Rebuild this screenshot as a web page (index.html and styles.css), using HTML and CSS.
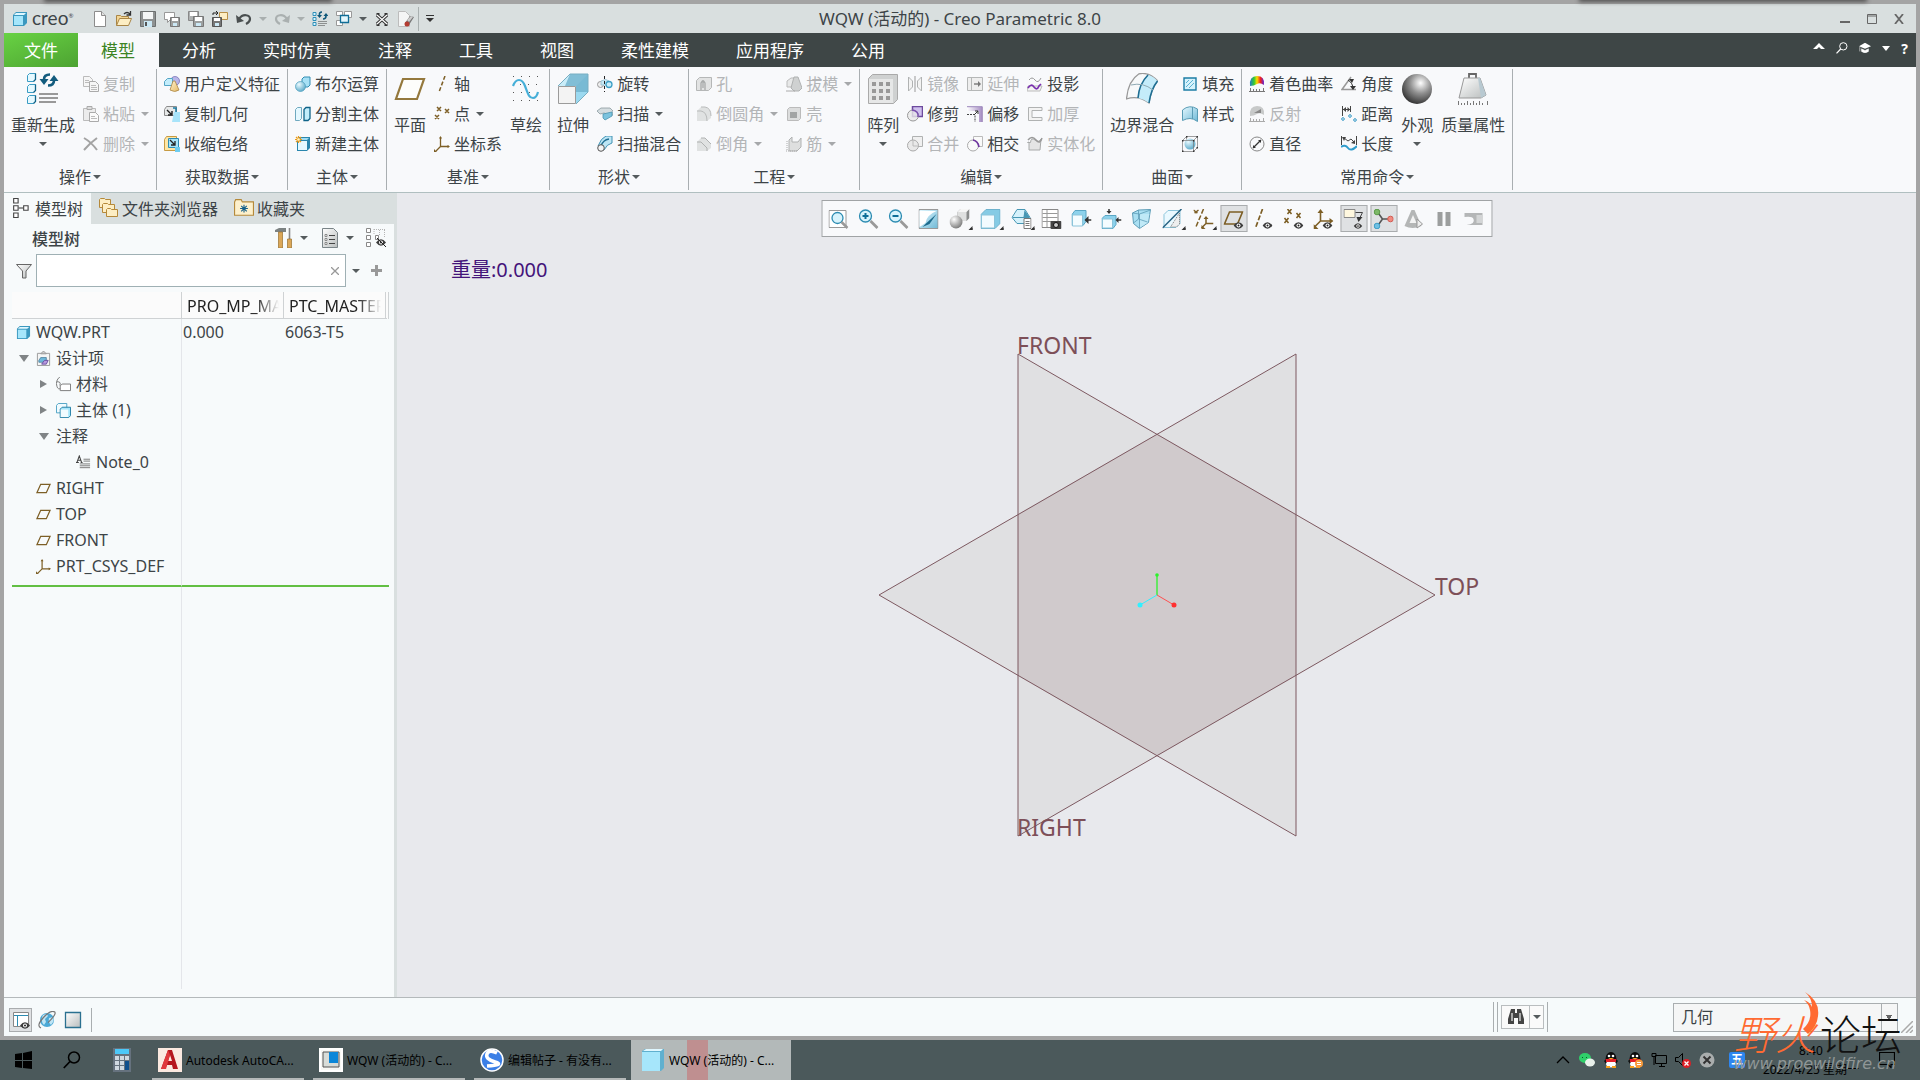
FILE: index.html
```html
<!DOCTYPE html>
<html lang="zh-CN">

<head>
    <meta charset="UTF-8">
    <meta name="viewport" content="width=device-width, initial-scale=1">
    <title>WQW (活动的) - Creo Parametric 8.0</title>
    <link rel="stylesheet" href="styles.css">
</head>

<body>
    <svg class="sprite" width="0" height="0" aria-hidden="true">
        <defs>
            <linearGradient id="g-blue" x1="0" y1="0" x2="1" y2="1"><stop offset="0" stop-color="#e4f8ff" /><stop offset="1" stop-color="#6fb9d6" /></linearGradient>
            <linearGradient id="g-gray" x1="0" y1="0" x2="1" y2="1"><stop offset="0" stop-color="#fff" /><stop offset="1" stop-color="#b9bdbd" /></linearGradient>
            <linearGradient id="g-gold" x1="0" y1="0" x2="1" y2="1"><stop offset="0" stop-color="#fff3d0" /><stop offset="1" stop-color="#e5b963" /></linearGradient>
            <linearGradient id="g-purple" x1="0" y1="0" x2="1" y2="0"><stop offset="0" stop-color="#fff" /><stop offset="1" stop-color="#a78fc4" /></linearGradient>
            <linearGradient id="g-rainbow"><stop offset="0" stop-color="#27c" /><stop offset=".3" stop-color="#3c3" /><stop offset=".5" stop-color="#fd0" /><stop offset=".75" stop-color="#e22" /><stop offset="1" stop-color="#52d" /></linearGradient>
            <radialGradient id="g-ball" cx=".62" cy=".3" r=".7"><stop offset="0" stop-color="#fff" /><stop offset=".5" stop-color="#909090" /><stop offset="1" stop-color="#3a3a3a" /></radialGradient>
            <radialGradient id="g-soft" cx=".35" cy=".3" r=".75"><stop offset="0" stop-color="#fff" /><stop offset="1" stop-color="#777" /></radialGradient>
            <radialGradient id="g-bball" cx=".35" cy=".3" r=".75"><stop offset="0" stop-color="#eafaff" /><stop offset="1" stop-color="#5aa9c8" /></radialGradient>
        </defs>

        <!-- shared pieces -->
        <symbol id="cube" viewBox="0 0 16 16"><path d="M1 4l3-3h11v11l-3 3H1z" fill="#3b98bf" /><path d="M2 5h9v9H2z" fill="#a6e6fb" /><path d="M2 4l2-2h10l-2 2z" fill="#dff7ff" /></symbol>
        <symbol id="eye" viewBox="0 0 10 7"><path d="M0 3.500Q5-3 10 3.500 5 10 0 3.500z" fill="#3c3c3c" /><circle cx="5" cy="3.500" r="2" fill="#fff" /><circle cx="5" cy="3.500" r="1" fill="#222" /></symbol>

        <!-- quick access -->
        <symbol id="new" viewBox="0 0 16 16"><path d="M2.500.5h7l4 4v11h-11z" fill="#fff" stroke="#8c8c8c" /><path d="M9.500.5v4h4" fill="#e2e2e2" stroke="#8c8c8c" /></symbol>
        <symbol id="open" viewBox="0 0 16 16"><path d="M.5 14.500v-10h4l1 1h7v3" fill="#f3d594" stroke="#a98546" /><path d="M.5 14.500l3-7h12l-3 7z" fill="#fdeec4" stroke="#a98546" /><path d="M8 3q3-3 6 0M14.500 0v4h-4" fill="none" stroke="#333" stroke-width="1.300" /></symbol>
        <symbol id="save" viewBox="0 0 16 16"><path d="M.5.5h15v15H.5z" fill="#8f9292" stroke="#6d7070" /><path d="M3 1h10v7H3z" fill="#f4f6f6" /><path d="M4 10h8v6H4z" fill="#cbe8f5" /><path d="M5 11h2v4H5z" fill="#555" /></symbol>
        <symbol id="saveas" viewBox="0 0 16 16"><path d="M.5 1.500h10v7h-4l-3 3v-3h-3z" fill="#fff" stroke="#999" /><path d="M6.500 6.500h9v9h-9z" fill="#9c9f9f" stroke="#777" /><path d="M8 7h6v3H8z" fill="#fff" /><path d="M9 12h4v3H9z" fill="#cbe8f5" /></symbol>
        <symbol id="savecopy" viewBox="0 0 16 16"><path d="M.5.5h10v9h-10z" fill="#aeb1b1" stroke="#888" /><path d="M2 1h7v4H2z" fill="#fff" /><path d="M5.500 5.500h10v10h-10z" fill="#9c9f9f" stroke="#777" /><path d="M7 6h7v4H7z" fill="#fff" /><path d="M8 12h5v3H8z" fill="#cbe8f5" /></symbol>
        <symbol id="saveto" viewBox="0 0 16 16"><path d="M7.500 1.500h8v7h-8z" fill="#fdeec4" stroke="#b89047" /><path d="M.5 6.500h9v9h-9z" fill="#777" stroke="#555" /><path d="M2 7h6v3H2z" fill="#fff" /><path d="M3 12h4v3H3z" fill="#cbe8f5" /><path d="M1 4V2h4M4 0l2 2-2 2" fill="none" stroke="#222" /></symbol>
        <symbol id="undo" viewBox="0 0 16 16"><path d="M3 8c4-6 11-4 11 0 0 3-2 4-4 5" fill="none" stroke="#4a4f50" stroke-width="2.200" /><path d="M0 4l1 8 7-2z" fill="#4a4f50" /></symbol>
        <symbol id="redo" viewBox="0 0 16 16"><path d="M13 8C9 2 2 4 2 8c0 3 2 4 4 5" fill="none" stroke="#aab0b0" stroke-width="2.200" /><path d="M16 4l-1 8-7-2z" fill="#aab0b0" /></symbol>
        <symbol id="regen" viewBox="0 0 16 16"><path d="M1 1.500h3v3H1zM1 6.500h3v3H1zM1 11.500h3v3H1z" fill="#d8f4ff" stroke="#2f8fb8" /><path d="M6 10.500h9M6 12.500h9M6 14.500h7" stroke="#8d9090" /><path d="M10 1Q7 1 7.500 4M11 8q3 0 3-3" fill="none" stroke="#10587a" stroke-width="1.600" /><path d="M5 4h5L7.500 7zM11.500 5h5L14 2z" fill="#10587a" /></symbol>
        <symbol id="windows" viewBox="0 0 16 16"><path d="M.5.500h6v4h-6zM8.500.500h7v6h-7zM.5 9.500h6v5h-6z" fill="#fff" stroke="#999" /><path d="M4.500 4.500h8v7h-8z" fill="#e4f6fc" stroke="#0f6d96" stroke-width="1.300" /></symbol>
        <symbol id="closewin" viewBox="0 0 16 16"><path d="M3 4l10 9M13 4L3 13M2.500 3.500h3M10.500 3.500h3M2.500 13.500h3M10.500 13.500h3" stroke="#333" stroke-width="3.200" /><path d="M3 4l10 9M13 4L3 13" stroke="#fff" stroke-width="1.200" /></symbol>
        <symbol id="erase" viewBox="0 0 16 16"><path d="M.5.5h7l4 4v11H.5z" fill="#f4f5f5" stroke="#bcbcbc" /><path d="M7 12l5-7 4 1-5 8z" fill="#777" /><path d="M9 9l4-4 2 1-4 5z" fill="#ccc" /><circle cx="9" cy="13" r="2.500" fill="#b33c32" /></symbol>

        <!-- ribbon, large -->
        <symbol id="regen32" viewBox="0 0 32 32"><g fill="#e6f9ff" stroke="#3a9cc4"><path d="M.5 2.500l2-2h6v6l-2 2h-6zM.5 13.500l2-2h6v6l-2 2h-6zM.5 24.500l2-2h6v6l-2 2h-6z" /></g><path d="M8.500.5v6l-2 2M8.500 11.500v6l-2 2M8.500 22.500v6l-2 2" fill="none" stroke="#0f6388" stroke-width="1.300" /><path d="M12 21h19M12 25h19M12 29h17" stroke="#999" stroke-width="2" /><path d="M23 1.500q-6 0-6 5M21 12.500q6 0 6-5" fill="none" stroke="#135c7e" stroke-width="2.600" /><path d="M12.500 6h9L17 12zM22.500 8h9L27 2z" fill="#135c7e" /></symbol>
        <symbol id="plane32" viewBox="0 0 32 32"><path d="M9 6h21L23 26H2z" fill="#fdfdfb" stroke="#94783c" stroke-width="2.200" /></symbol>
        <symbol id="sketch32" viewBox="0 0 32 32"><path d="M3 3.500h26M3 11.500h2M10 11.500h20M3 19.500h26M3 27.500h26" stroke="#555" stroke-dasharray="1 7" /><path d="M3 13c3-8 9-8 12 0s4 12 8 12c3 0 4-2 5-6" fill="none" stroke="#46afd8" stroke-width="2.200" /></symbol>
        <symbol id="extrude32" viewBox="0 0 32 32"><path d="M1 13L13 1h18L19 13z" fill="#c9edf9" /><path d="M31 1v18L19 31V13z" fill="#9bd9f0" /><path d="M13 1h18v18H19v-6H8z" fill="#6fb2cd" opacity=".8" /><path d="M1.500 13.500h17v17h-17z" fill="#f3f3f3" stroke="#9b9b9b" /><path d="M1 13L13 1h18v18L19 31" fill="none" stroke="#79aec2" /></symbol>
        <symbol id="array32" viewBox="0 0 32 32"><path d="M1.500 5.500l4-4h25v25l-4 4h-25z" fill="#cfd1d1" stroke="#aaa" /><path d="M2 6h24v24H2z" fill="#e6e7e7" /><path d="M5 9h4v4H5zM12 9h4v4h-4zM19 9h4v4h-4zM5 16h4v4H5zM12 16h4v4h-4zM19 16h4v4h-4zM5 23h4v4H5zM12 23h4v4h-4zM19 23h4v4h-4z" fill="#999" /></symbol>
        <symbol id="blend32" viewBox="0 0 32 32"><path d="M.5 26Q2 8 13 .8q10-2 18.500 7Q25 16 23 30 12 22 .5 26z" fill="#f7f9fa" stroke="#999" stroke-width="1.300" /><path d="M22 2q5 1 9.500 6Q25 16 23 30q-5-4-11-5Q13 11 22 2z" fill="#c4ecfa" /><path d="M22 2Q13 11 12 25M31.500 8Q25 16 23 30" fill="none" stroke="#1f6e92" stroke-width="1.600" /><path d="M5 12q12-3 22 5" fill="none" stroke="#8fa9b3" /></symbol>
        <symbol id="ball32" viewBox="0 0 32 32"><circle cx="16" cy="16" r="15" fill="url(#g-ball)" /></symbol>
        <symbol id="mass32" viewBox="0 0 32 32"><path d="M12 5V1h7v4" fill="none" stroke="#666" stroke-width="1.800" /><path d="M7 5h16l6 17-5 3H2z" fill="url(#g-gray)" stroke="#999" /><path d="M21 5l3 20 5-3-6-17z" fill="#b8c9d1" /><path d="M1 32.500h30M1.500 28v4M4.500 30v2M7.500 30v2M10.500 28v4M13.500 30v2M16.500 28v4M19.500 30v2M22.500 28v4M25.500 30v2M30.500 28v4" stroke="#777" /></symbol>

        <!-- ribbon, small -->
        <symbol id="copy" viewBox="0 0 16 16"><path d="M.5.5h6l3 3v7h-9z" fill="#f6f6f6" stroke="#bbb" /><path d="M6.500 5.500h6l3 3v7h-9z" fill="#f6f6f6" stroke="#aaa" /><path d="M2 4.500h4M2 6.500h4M8 9.500h5M8 11.500h6M8 13.500h6" stroke="#bbb" /></symbol>
        <symbol id="paste" viewBox="0 0 16 16"><path d="M.5 2.500h12v12H.5z" fill="#ececec" stroke="#bbb" /><path d="M4 .5h5v3H4z" fill="#ddd" stroke="#aaa" /><path d="M6.500 6.500h6l3 3v6h-9z" fill="#fafafa" stroke="#aaa" /><path d="M8 10.500h4M8 12.500h6" stroke="#bbb" /></symbol>
        <symbol id="delete" viewBox="0 0 16 16"><path d="M1 2q7 4 13 12M14 2Q7 7 1 14" fill="none" stroke="#a3a3a3" stroke-width="2" /></symbol>
        <symbol id="udf" viewBox="0 0 16 16"><circle cx="11" cy="5" r="4.500" fill="#b9b5e8" stroke="#7b76b8" stroke-width=".8" /><path d="M.5 5.500l3-3h5v7h-8z" fill="#c3edfb" stroke="#55a5c5" /><path d="M9 5h2l4 9q-4 3-9 0z" fill="url(#g-gold)" stroke="#a98546" stroke-width=".8" /></symbol>
        <symbol id="copygeom" viewBox="0 0 16 16"><path d="M.5 3.500l2-3h10v9H.5z" fill="#e6e8e8" stroke="#8c8c8c" /><path d="M10 6h6v10H8z" fill="#a8e4fa" /><path d="M3 4l5 5M8 5v4H4" stroke="#222" stroke-width="1.400" fill="none" /><path d="M9 2h3v4" fill="none" stroke="#1b7ba3" stroke-width="1.500" /></symbol>
        <symbol id="shrink" viewBox="0 0 16 16"><path d="M.5 3.500l2-3h10v14H.5z" fill="#ffe6a4" stroke="#c79b43" /><path d="M4.500 2.500h10v9h-10z" fill="#a8e4fa" stroke="#2c8cb4" /><path d="M6 4l5 5M11 5v4H7" stroke="#222" stroke-width="1.300" fill="none" /><path d="M11 11h5v5h-5z" fill="#6fcdf0" /></symbol>
        <symbol id="boolean" viewBox="0 0 16 16"><path d="M7 3l2-2h6v8l-2 2H7z" fill="#a6e0f5" stroke="#328db3" /><circle cx="5.500" cy="10.500" r="5" fill="url(#g-bball)" stroke="#4a9dbd" stroke-width=".7" /></symbol>
        <symbol id="split" viewBox="0 0 16 16"><path d="M.5 3.500l2-2h4v11l-2 2h-4z" fill="#e4f8ff" stroke="#6fa9bf" /><path d="M9 3.500l2-2h4v11l-2 2H9z" fill="#c2edfb" stroke="#0f6388" stroke-width="1.300" /></symbol>
        <symbol id="newbody" viewBox="0 0 16 16"><path d="M2 4l2-3h11v11l-3 3H2z" fill="#2a86ad" /><path d="M3 5h9v9H3z" fill="#e4f8ff" /><path d="M5 4l1-2h8l-2 2z" fill="#9fdcf2" /><path d="M3.500 0v7M0 3.500h7M1 1l5 5M6 1L1 6" stroke="#e99a1b" stroke-width="1.200" /><circle cx="3.500" cy="3.500" r="1.300" fill="#fff6c6" /></symbol>
        <symbol id="axis" viewBox="0 0 16 16"><path d="M11 0L5 16" stroke="#7d5f26" stroke-width="1.500" stroke-dasharray="4 2" /></symbol>
        <symbol id="point" viewBox="0 0 16 16"><path d="M3 1l4 4M7 1L3 5M11 3l4 4M15 3l-4 4M1 9l4 4M5 9l-4 4" stroke="#7d5f26" stroke-width="1.500" /></symbol>
        <symbol id="csys" viewBox="0 0 16 16"><path d="M6.500 1v9.500H15M6.500 10.500L2 15" fill="none" stroke="#7d5f26" stroke-width="1.300" /><path d="M5 2.500l1.500-2.500L8 2.500zM13.500 9l2.500 1.500-2.500 1.500zM0 13l3 3H0z" fill="#7d5f26" /></symbol>
        <symbol id="revolve" viewBox="0 0 16 16"><circle cx="3.500" cy="8.500" r="3" fill="#eee" stroke="#999" /><path d="M4 5q5-3 8 0v4H4z" fill="#c9e9f5" stroke="#85b5c8" stroke-width=".7" /><circle cx="12" cy="8.500" r="3" fill="#c9ecf8" stroke="#3d9fc6" stroke-width="1.300" /><path d="M7.500 0v16" stroke="#222" stroke-dasharray="3 2" /></symbol>
        <symbol id="sweep" viewBox="0 0 16 16"><path d="M0 5l4-3h9l3 3v4h-4l-5-2-4 1z" fill="#d5dde0" stroke="#8a9a9f" stroke-width=".8" /><path d="M6 8l9-2v4l-7 4-2-2z" fill="#7cc3de" stroke="#4d94b0" stroke-width=".8" /></symbol>
        <symbol id="sweepblend" viewBox="0 0 16 16"><path d="M1 10Q4 2 9 0h6v7Q10 8 7 14z" fill="#bce5f4" stroke="#4092b3" /><path d="M4 10Q6 4 12 3" fill="none" stroke="#1f6e92" stroke-width="1.300" /><circle cx="4" cy="12" r="3.300" fill="#f3f3f3" stroke="#555" /></symbol>
        <symbol id="hole" viewBox="0 0 16 16"><path d="M.5 4.500l3-3h12v10l-3 3H.5z" fill="#e2e3e3" stroke="#b5b7b7" /><path d="M5 14V7q2-4 4 0v7M7 4v8" fill="none" stroke="#a8aaaa" stroke-width="1.300" /></symbol>
        <symbol id="round" viewBox="0 0 16 16"><path d="M1 5l4-4h4q6 1 6 8v3l-4 3H1z" fill="#e0e2e2" /><path d="M1 5h4q6 1 6 10M5 1h4q6 1 6 9" fill="none" stroke="#b9bbbb" /></symbol>
        <symbol id="chamfer" viewBox="0 0 16 16"><path d="M1 6l4-4h4l6 6v4l-4 3H1z" fill="#e0e2e2" /><path d="M1 6h4l6 6v3M5 2h4l6 6" fill="none" stroke="#b0b2b2" /></symbol>
        <symbol id="draft" viewBox="0 0 16 16"><path d="M1 5l4-3h5v9H1z" fill="#e7e8e8" stroke="#bbb" /><path d="M8 1h4l4 11-3 3H8L5 12z" fill="#cfd1d1" stroke="#b0b2b2" /><path d="M0 15h9" stroke="#aaa" /></symbol>
        <symbol id="shell" viewBox="0 0 16 16"><path d="M1.500 3.500l2-2h11v11l-2 2h-11z" fill="#dcdddd" stroke="#bbb" /><path d="M4 6h7v6H4z" fill="#a2a4a4" /></symbol>
        <symbol id="rib" viewBox="0 0 16 16"><path d="M3 4l3-3v5h6l3-4v9l-4 4H3z" fill="#dedfdf" stroke="#b0b2b2" /><path d="M0 15h12M1 5v10" stroke="#aaa" stroke-dasharray="1 1" /></symbol>
        <symbol id="mirror" viewBox="0 0 16 16"><path d="M1.500 1l4 4v6l-4 4zM14.500 1l-4 4v6l4 4z" fill="#f3f3f3" stroke="#b0b2b2" /><path d="M8 0v16" stroke="#999" /></symbol>
        <symbol id="trim" viewBox="0 0 16 16"><path d="M5.500.5h10v10h-10z" fill="#cfc0ee" stroke="#6d4a9e" stroke-width="1.500" /><circle cx="6" cy="9.500" r="5.500" fill="#e9e9e9" fill-opacity=".8" stroke="#999" /><path d="M5 4q7 1 6 7" stroke="#7a4fb0" fill="none" stroke-width="1.500" /></symbol>
        <symbol id="merge" viewBox="0 0 16 16"><path d="M5.500.5h10v10h-10z" fill="#f0f0f0" stroke="#b0b2b2" /><circle cx="6" cy="9.500" r="5.500" fill="#e9e9e9" stroke="#aaa" /><path d="M6 4v6h5" fill="none" stroke="#bbb" /></symbol>
        <symbol id="extend" viewBox="0 0 16 16"><path d="M.5 1.500h15v13H.5z" fill="#eee" stroke="#b5b7b7" /><path d="M4.500 2v12" stroke="#b5b7b7" /><path d="M7 8h5" stroke="#777" stroke-width="1.400" /><path d="M11 5l3 3-3 3z" fill="#777" /></symbol>
        <symbol id="offset" viewBox="0 0 16 16"><path d="M0 1h15v15h-3V5H0z" fill="url(#g-purple)" /><path d="M0 .7h15.300V16" fill="none" stroke="#9b85ba" /><path d="M0 8.500h8V16" fill="none" stroke="#444" stroke-dasharray="2 1" /><path d="M7 9l4-4M11 8V5H8" fill="none" stroke="#333" /></symbol>
        <symbol id="intersect" viewBox="0 0 16 16"><path d="M6.500.5h9v10h-9z" fill="#fafafa" stroke="#bbb" /><circle cx="6" cy="9.500" r="5.500" fill="#fafafa" stroke="#aaa" /><path d="M6 4q5 1 6 7" stroke="#7037a0" fill="none" stroke-width="1.700" /></symbol>
        <symbol id="project" viewBox="0 0 16 16"><path d="M2 4q3-4 6 0t6-2" fill="none" stroke="#999" /><path d="M1 10h14l-2 5H0z" fill="#f3f3f3" stroke="#bbb" /><path d="M1 12q3-5 6-1t5-1l2-2" fill="none" stroke="#7a2fb0" stroke-width="1.700" /></symbol>
        <symbol id="thicken" viewBox="0 0 16 16"><path d="M15 1.500H1.500v13H15v-3H5v-7h10z" fill="#f3f3f3" stroke="#b0b2b2" /></symbol>
        <symbol id="solidify" viewBox="0 0 16 16"><path d="M.5 6.500h3Q4 1 8 4t6-1l-1 11H2V6z" fill="#e4e5e5" stroke="#a8aaaa" /><path d="M1 4q4-5 8 0t6-2" fill="none" stroke="#999" stroke-width="1.500" /></symbol>
        <symbol id="fill" viewBox="0 0 16 16"><path d="M2 2h12v12H2z" fill="#d5f2fc" stroke="#1d7da5" stroke-width="1.400" /><path d="M4 11l7-7M7 12l5-5M4 7l3-3" stroke="#5cb3d3" /></symbol>
        <symbol id="style" viewBox="0 0 16 16"><path d="M.5 14.500V4q7-6 15-1v12.500q-4-3-7.500-3t-7.500 2z" fill="url(#g-blue)" stroke="#5a9cb5" /><path d="M10.500 1v12" stroke="#5a9cb5" /></symbol>
        <symbol id="freestyle" viewBox="0 0 16 16"><circle cx="8" cy="8" r="5.500" fill="url(#g-bball)" /><path d="M.5 4.500h11v11H.5zM4.500.5h11v11M4.500.5v3M.5 4.500l4-4M11.500 4.500l4-4M11.500 15.500l4-4" fill="none" stroke="#777" stroke-width=".7" /><path d="M0 4h1.500v1.500H0zM11 4h1.500v1.500H11zM0 14.500h1.500V16H0zM11 14.500h1.500V16H11zM4 0h1.500v1.500H4zM14.500 0H16v1.500h-1.500zM14.500 11H16v1.500h-1.500z" fill="#333" /></symbol>
        <symbol id="curvature" viewBox="0 0 16 16"><path d="M1 10Q0 0 8 0t7 9q-4-3-7-1t-7 2z" fill="url(#g-rainbow)" /><path d="M0 15.500h16M1.500 12v3M4.500 13v2M7.500 13v2M10.500 13v2M14.500 12v3" stroke="#777" /></symbol>
        <symbol id="reflect" viewBox="0 0 16 16"><path d="M1 10Q0 0 8 0t7 9q-4-3-7-1t-7 2z" fill="#c7c9c9" /><path d="M5 7l7-4v4z" fill="#888" /><path d="M0 15.500h16M1.500 12v3M4.500 13v2M7.500 13v2M10.500 13v2M14.500 12v3" stroke="#aaa" /></symbol>
        <symbol id="diameter" viewBox="0 0 16 16"><circle cx="8" cy="8" r="7" fill="none" stroke="#888" /><path d="M4 12l8-8" stroke="#333" stroke-width="1.300" /><path d="M4 9v3h3zM12 7V4H9z" fill="#333" /></symbol>
        <symbol id="angle" viewBox="0 0 16 16"><path d="M10 1L1 13.500h14" fill="none" stroke="#999" stroke-width="1.500" /><path d="M7 4q5 3 5 9" fill="none" stroke="#333" /><path d="M8 3l5 0-2 4zM9 10h6l-3 4z" fill="#333" /></symbol>
        <symbol id="distance" viewBox="0 0 16 16"><path d="M1.500 0v10M9.500 0v6M2 3.500h7" stroke="#444" /><path d="M5 1L2 3.500 5 6zM6.500 1L9 3.500 6.500 6z" fill="#444" /><circle cx="2" cy="13" r="1.300" fill="#fff" stroke="#2f95c4" /><circle cx="9" cy="10" r="1.300" fill="#fff" stroke="#2f95c4" /><circle cx="14" cy="14" r="1.300" fill="#fff" stroke="#2f95c4" /></symbol>
        <symbol id="length" viewBox="0 0 16 16"><path d="M.5 0v9M15.500 0v9M3 2l4 3 3-2 4 4" fill="none" stroke="#444" /><path d="M1 1h4L3 5zM14 8V4l-4 3z" fill="#444" /><path d="M0 11q4-3 7 1t9-2" fill="none" stroke="#2f9ccc" stroke-width="2" /></symbol>

        <!-- graphics toolbar -->
        <symbol id="v-refit" viewBox="0 0 20 20"><path d="M.5 1.500h17v17H.5z" fill="#fff" stroke="#999" /><circle cx="9" cy="9" r="5.500" fill="#d8f3fc" stroke="#2d8cb2" stroke-width="1.300" /><path d="M13 13l6 6" stroke="#999" stroke-width="2.500" /></symbol>
        <symbol id="v-zoomin" viewBox="0 0 20 20"><circle cx="7" cy="7" r="6" fill="#d8f3fc" stroke="#2d8cb2" stroke-width="1.300" /><path d="M4 7h6M7 4v6" stroke="#0e6e98" stroke-width="2" /><path d="M12 12l7 7" stroke="#999" stroke-width="2.800" /></symbol>
        <symbol id="v-zoomout" viewBox="0 0 20 20"><circle cx="7" cy="7" r="6" fill="#d8f3fc" stroke="#2d8cb2" stroke-width="1.300" /><path d="M4 7h6" stroke="#0e6e98" stroke-width="2" /><path d="M12 12l7 7" stroke="#999" stroke-width="2.800" /></symbol>
        <symbol id="v-repaint" viewBox="0 0 20 20"><path d="M.5.5h19v19H.5z" fill="url(#g-blue)" stroke="#999" /><path d="M1 2h17Q8 6 7 14l-6 4z" fill="#fff" /><path d="M18 5L8 14l-4 4 7-3z" fill="#1d6b8d" /></symbol>
        <symbol id="v-shade" viewBox="0 0 20 20"><path d="M8 3l3-3h9v9l-3 3H8z" fill="#8a8c8c" /><path d="M8 3h9v9H8z" fill="#dfe0e0" /><path d="M8 3l3-3h9l-3 3z" fill="#f6f6f6" /><circle cx="6.500" cy="13" r="6.500" fill="url(#g-soft)" /></symbol>
        <symbol id="v-style" viewBox="0 0 20 20"><path d="M.5 5.500l5-5h14v14l-5 5H.5z" fill="#85cbe5" stroke="#6eb2cd" /><path d="M1 6h13v13H1z" fill="#f2fbff" stroke="#8bc4da" /></symbol>
        <symbol id="v-saved" viewBox="0 0 20 20"><path d="M.5 8.500l5-8h8l5 8-5 6h-8z" fill="#d5f1fb" stroke="#4897b4" /><path d="M13 1l5 7h-6z" fill="#4897b4" /><path d="M1 8.500h17" stroke="#4897b4" /><path d="M12.500 9.500h7v10h-7z" fill="#fff" stroke="#777" /><path d="M14 12.500h4M14 14.500h4M14 16.500h4" stroke="#777" /></symbol>
        <symbol id="v-manager" viewBox="0 0 20 20"><path d="M.5.500h16v18H.5z" fill="#fff" stroke="#888" /><path d="M5.500 1v17M1 4.500h15M1 8.500h15M1 12.500h15" stroke="#999" /><rect x="9" y="12" width="11" height="8" rx="1" fill="#444" /><circle cx="14.500" cy="16" r="2.500" fill="#ccc" stroke="#111" /></symbol>
        <symbol id="v-front" viewBox="0 0 20 20"><path d="M.5 5.500l3-4h11v11l-3 4H.5z" fill="#8dd2ec" stroke="#5aa6c4" /><path d="M1 6h10v11H1z" fill="#f4fcff" stroke="#8bc4da" /><path d="M14 11h6" stroke="#333" stroke-width="1.500" /><path d="M13 11l4-4v8z" fill="#333" /></symbol>
        <symbol id="v-orient" viewBox="0 0 20 20"><path d="M.5 9.500l3-3h11v9l-3 4H.5z" fill="#8dd2ec" stroke="#5aa6c4" /><path d="M1 10h10v9H1z" fill="#f4fcff" stroke="#8bc4da" /><path d="M16 11h4M7.500 0v3" stroke="#333" stroke-width="1.500" /><path d="M14 11l3-3v6zM5 2h5L7.500 5z" fill="#333" /></symbol>
        <symbol id="v-persp" viewBox="0 0 20 20"><path d="M1 4l6-3 12-.500-2 13-9 6-6-5z" fill="#a9dff2" stroke="#5e9db7" /><path d="M8 5h10l-2 9-8 5z" fill="#c9edf9" opacity=".7" /><path d="M1 4l7 1 11-4M8 5v14M7 1v9l9 3M7 10l-5 4" fill="none" stroke="#5e9db7" stroke-width=".8" /></symbol>
        <symbol id="v-section" viewBox="0 0 20 20"><path d="M1.500 5.500l4-4h12v13l-4 4h-12z" fill="#eaf9ff" stroke="#8bc4da" /><path d="M8 18h6l3-3V4z" fill="#eee" stroke="#777" stroke-dasharray="1 1" /><path d="M19 0L0 19" stroke="#245f80" stroke-width="1.500" /></symbol>
        <symbol id="v-datum" viewBox="0 0 20 20"><path d="M0 1l5 4M5 1L0 5M10 0L2 19" stroke="#7d5f26" stroke-width="1.500" stroke-dasharray="5 2" /><path d="M12.500 8v6.500H20M12.500 14.500L8 19" fill="none" stroke="#7d5f26" stroke-width="1.500" /><path d="M10 10l2.500-3 2.500 3zM8 16v4h4z" fill="#7d5f26" /></symbol>
        <symbol id="v-plane" viewBox="0 0 20 20"><path d="M6 3h13l-5 12H1z" fill="none" stroke="#7d5f26" stroke-width="1.600" /><use href="#eye" x="10" y="13" width="10" height="7" /></symbol>
        <symbol id="v-axis" viewBox="0 0 20 20"><path d="M9 0L2 19" stroke="#7d5f26" stroke-width="1.700" stroke-dasharray="5 2" /><use href="#eye" x="9" y="13" width="10" height="7" /></symbol>
        <symbol id="v-point" viewBox="0 0 20 20"><path d="M4 0l4 5M8 0L4 5M13 4l4 5M17 4l-4 5M1 9l4 5M5 9l-4 5" stroke="#7d5f26" stroke-width="1.600" /><use href="#eye" x="10" y="13" width="10" height="7" /></symbol>
        <symbol id="v-csys" viewBox="0 0 20 20"><path d="M7 2v10h11M7 12l-6 6" fill="none" stroke="#7d5f26" stroke-width="1.600" /><path d="M4 4l3-4 3 4zM16 9l4 3-4 3zM0 15v5h5z" fill="#7d5f26" /><use href="#eye" x="9" y="13" width="10" height="7" /></symbol>
        <symbol id="v-note" viewBox="0 0 20 20"><path d="M.5.5h11v8H.5z" fill="#fff8df" stroke="#888" /><path d="M12 3.500h7l-3 6" fill="none" stroke="#444" /><path d="M13 8h6l-4 5z" fill="#333" /><use href="#eye" x="10" y="14" width="9" height="6" /></symbol>
        <symbol id="v-spin" viewBox="0 0 20 20"><path d="M4 3l5 7-5 7M9 10h9" fill="none" stroke="#555" stroke-width="1.600" /><circle cx="3.500" cy="3" r="2.800" fill="#7db868" stroke="#5a9a48" /><circle cx="17" cy="10" r="2.800" fill="#f08a80" stroke="#d05a50" /><circle cx="3.500" cy="17" r="2.800" fill="#6fc1e4" stroke="#3d9cc4" /></symbol>
        <symbol id="v-sim" viewBox="0 0 20 20"><path d="M8 1h3l7 16q-9 4-17 0z" fill="#b4b6b6" /><path d="M9.500 6l3.500 8H6z" fill="#f3f3f3" /><path d="M13.500 10l5.500 5-5.500 4z" fill="#eee" stroke="#999" /></symbol>
        <symbol id="v-pause" viewBox="0 0 20 20"><path d="M4 3h5v14H4zM12 3h5v14h-5z" fill="#9c9e9e" /></symbol>
        <symbol id="v-stop" viewBox="0 0 20 20"><path d="M1 4h18v12H3q9-1 7-6-1-3-9-2z" fill="#b4b6b7" /><path d="M13 6h6v8h-6z" fill="#d3d5d6" /></symbol>

        <!-- model tree -->
        <symbol id="tree" viewBox="0 0 16 18"><path d="M.5.500h4v4h-4zM.5 7h4v4h-4zM.5 13.500h4v4h-4zM9.500 7h4v4h-4z" fill="#fff" stroke="#444" /><path d="M5 9h4" stroke="#444" /></symbol>
        <symbol id="folders" viewBox="0 0 20 20"><g fill="#fdeec4" stroke="#b5893a"><path d="M.5 1.500l1-1h4l1 1h5v8H.5z" /><path d="M3.500 6.500l1-1h4l1 1h6v8h-12z" /><path d="M7.500 11.500l1-1h3l1 1h6v7h-11z" /></g></symbol>
        <symbol id="favorites" viewBox="0 0 18 16"><path d="M.5 2.500l1-2h5l1 2h10v12H.5z" fill="#fdf0cc" stroke="#b5893a" /><path d="M9 5v7M5.500 8.500h7M6.500 6l5 5M11.500 6l-5 5" stroke="#15608a" /></symbol>
        <symbol id="tools" viewBox="0 0 18 20"><path d="M0 2l4-2h7v4H0z" fill="#7c8282" /><path d="M3.500 4h4v16h-4z" fill="#dba758" stroke="#99702c" stroke-width=".7" /><path d="M14.500 0v12" stroke="#888" stroke-width="1.600" /><path d="M12.500 11h4v9h-4z" fill="#dba758" stroke="#99702c" stroke-width=".7" /></symbol>
        <symbol id="settings" viewBox="0 0 18 20"><path d="M1.500.5h11l4 4v15h-15z" fill="url(#g-gray)" stroke="#7a8488" /><path d="M8 7.500h6M8 11.500h6M8 15.500h6" stroke="#444" /><path d="M4 6.500h2v2H4zM4 10.500h2v2H4zM4 14.500h2v2H4z" fill="#fff" stroke="#666" stroke-width=".7" /></symbol>
        <symbol id="treehide" viewBox="0 0 20 20"><path d="M.5.5h4v4h-4zM.5 7.500h4v4h-4zM.5 14.500h4v4h-4zM9.500 7.500h3v4h-3z" fill="#fff" stroke="#888" /><path d="M8 1.500h11M8 1v6M13.500 2v6M18.500 2v8" stroke="#b5b5b5" stroke-dasharray="1 1" /><use href="#eye" x="10" y="11" width="10" height="7" /><path d="M11 10l9 9" stroke="#222" /></symbol>
        <symbol id="filter" viewBox="0 0 16 16"><path d="M.5 1.500h15L10 8v7H6.500V8z" fill="url(#g-gray)" stroke="#666" /></symbol>
        <symbol id="designitems" viewBox="0 0 16 16"><path d="M1.500 2.500h13v13h-13z" fill="#f4f5f5" stroke="#999" /><path d="M5 3l3-3 3 3z" fill="#ccc" stroke="#999" /><path d="M3 10l2-3h6v5H3z" fill="#6fb9dc" stroke="#356b8a" stroke-width=".7" /><path d="M6 14l3-4h4l-2 4z" fill="#b79ae0" stroke="#6c4fa0" /></symbol>
        <symbol id="material" viewBox="0 0 16 16"><path d="M4 0Q-1 4 1 10q1 4 5 2M1 5q5 0 3 4" fill="none" stroke="#777" /><path d="M4.500 9.500l2-2h9v7h-11z" fill="#fff" stroke="#777" /></symbol>
        <symbol id="bodies" viewBox="0 0 16 16"><path d="M.5 2.500l2-2h9v10H.5z" fill="#f1fbff" stroke="#4aa0c2" /><path d="M4.500 6.500l2-2h9v9l-2 2h-9z" fill="#a6e6fb" stroke="#1f7ba2" /><path d="M5 7h8v8H5z" fill="#f1fbff" /></symbol>
        <symbol id="note" viewBox="0 0 16 16"><path d="M1 8l2.500-7L6 8M2 5.500h3M0 8h3M5 8h2" fill="none" stroke="#444" stroke-width="1.100" /><path d="M8 4.500h7M8 6.500h7M4 9.500h11M4 11.500h11M4 13.500h11" stroke="#777" /></symbol>
        <symbol id="plane" viewBox="0 0 16 16"><path d="M5 3.500h10l-4 9H1z" fill="none" stroke="#7d5f26" stroke-width="1.300" /></symbol>

        <!-- status bar and taskbar -->
        <symbol id="navpane" viewBox="0 0 18 18"><path d="M1.500 1.500h15v14h-15z" fill="#fff" stroke="#888" /><path d="M2 4.500h14M5.500 5v10" stroke="#2d8cb2" /><use href="#eye" x="8" y="11" width="10" height="7" /></symbol>
        <symbol id="globe" viewBox="0 0 18 18"><circle cx="9" cy="9" r="7" fill="#4ba9d6" /><path d="M5 4q4-2 5 1l-3 3 1 3-2 3q-4-4-1-10zM11 7l4-1q2 4-2 8-3-2-2-7z" fill="#bfe5f5" /><path d="M3 17Q-2 15 5 7T16 .7q4 1-6 11" fill="none" stroke="#777" stroke-width="1.200" /></symbol>
        <symbol id="page" viewBox="0 0 18 18"><path d="M1.500 1.500h15v15h-15z" fill="url(#g-gray)" stroke="#2a7090" stroke-width="1.300" /></symbol>
        <symbol id="find" viewBox="0 0 18 16"><path d="M4 0h4v4h2V0h4l3 10v5h-6V9H7v6H1v-5z" fill="#444" /><path d="M4 4h2v8H4zM12 4h2v8h-2z" fill="#aaa" /></symbol>
        <symbol id="winlogo" viewBox="0 0 18 18"><path d="M0 3l7-1v7H0zM8 2l9-2v9H8zM0 10h7v7l-7-1zM8 10h9v8l-9-1z" fill="#000" /></symbol>
        <symbol id="search" viewBox="0 0 18 18"><circle cx="11" cy="6.500" r="5.500" fill="none" stroke="currentColor" stroke-width="1.500" /><path d="M7 10.500L.8 17" stroke="currentColor" stroke-width="1.800" /></symbol>
        <symbol id="calc" viewBox="0 0 18 24"><path d="M0 0h18v24H0z" fill="#66727e" /><path d="M2 1h14v5H2z" fill="#4cc8f8" /><path d="M2 8h4v4H2zM7 8h4v4H7zM12 8h4v4h-4zM2 13h4v4H2zM7 13h4v4H7zM2 18h4v4H2zM7 18h4v4H7z" fill="#cfd8e0" /><path d="M12 13h4v9h-4z" fill="#0f4f8c" /></symbol>
        <symbol id="autocad" viewBox="0 0 24 24"><path d="M0 0h24v24H0z" fill="#fbe9e0" /><path d="M3 21L10 2h4l6 19h-5l-1-4H9l-2 4z" fill="#b5161d" /><path d="M10 13l2-6 2 6z" fill="#fbe9e0" /><path d="M3 21L10 2l2 5-4 14z" fill="#e0383c" /></symbol>
        <symbol id="creoapp" viewBox="0 0 24 24"><path d="M1 1h22v22H1z" fill="#f7f7f4" stroke="#fff" stroke-width="2" /><path d="M4 4h16v15H4z" fill="#d8dcd8" stroke="#555" /><path d="M10 4h9v11h-9z" fill="#0b86d8" /></symbol>
        <symbol id="creopart" viewBox="0 0 24 24"><path d="M1 3l3-2h19v19l-3 3H1z" fill="#5fb0cf" /><path d="M1 4h18v19H1z" fill="#a6e6fb" /><path d="M2 3l3-2h17l-2 2z" fill="#dff7ff" /></symbol>
        <symbol id="browser" viewBox="0 0 24 24"><circle cx="12" cy="12" r="11" fill="#3b7fe6" stroke="#fff" stroke-width="1.500" /><path d="M17 5Q9 1 7 6t8 8-8 4" fill="none" stroke="#fff" stroke-width="3.500" /></symbol>
        <symbol id="flame" viewBox="0 0 20 42"><path d="M5 0q15 9 13 24-1 11-10 18l-5-5q9-8 7-19-1-6-6-10 6 2 8 7 0-9-7-15z" fill="#ff6a32" /></symbol>
        <symbol id="wechat" viewBox="0 0 16 16"><ellipse cx="6" cy="6" rx="6" ry="5" fill="#2fd06a" /><ellipse cx="11" cy="10.500" rx="5" ry="4" fill="#e8f0ea" /><path d="M3 5h1v1H3zM7 5h1v1H7z" fill="#0a5a2a" /></symbol>
        <symbol id="qq" viewBox="0 0 16 16"><ellipse cx="8" cy="7" rx="5.500" ry="7" fill="#0b0b0b" /><ellipse cx="8" cy="12" rx="5" ry="3.500" fill="#fff" /><path d="M2 7h12l-1 3H3z" fill="#e4202a" /><path d="M1 9l2-2v5zM15 9l-2-2v5z" fill="#111" /><circle cx="6" cy="4" r="1.300" fill="#fff" /><circle cx="10" cy="4" r="1.300" fill="#fff" /><path d="M5 6h6l-3 1.500zM3 14h4v2H3zM9 14h4v2H9z" fill="#f7a01c" /></symbol>
        <symbol id="network" viewBox="0 0 16 16"><path d="M4.500 3.500h11v8h-11zM8 14.500h6M10.500 12v2M1 1.500h4v3H1zM3 5v8" fill="none" stroke="#000" /></symbol>
        <symbol id="volume" viewBox="0 0 16 16"><path d="M.5 5.500h3l4-4v12l-4-4h-3z" fill="none" stroke="#000" /><circle cx="11.500" cy="11.500" r="4.500" fill="#dc1f26" /><path d="M9.500 9.500l4 4M13.500 9.500l-4 4" stroke="#fff" stroke-width="1.300" /></symbol>
        <symbol id="offline" viewBox="0 0 16 16"><circle cx="8" cy="8" r="7.500" fill="#a9adad" /><path d="M4.500 4.500l7 7M11.500 4.500l-7 7" stroke="#333" stroke-width="2" /></symbol>
        <symbol id="action" viewBox="0 0 16 16"><path d="M.5.5h15v12H12v3l-3-3H.5z" fill="none" stroke="#000" stroke-width="1.200" /></symbol>
        <symbol id="grad" viewBox="0 0 14 12"><path d="M0 4l7-4 7 4-7 3z" fill="#fff" /><path d="M3 7l4 2 4-2v3q-4 3-8 0zM1 5v5" fill="#fff" stroke="#fff" stroke-width=".7" /></symbol>
    </svg>

    <div class="app">
        <header class="titlebar">
            <div class="brand"><svg class="ic"><use href="#cube" /></svg><span>creo<sup>®</sup></span></div>
            <div class="quick">
                <button aria-label="新建"><svg class="ic"><use href="#new" /></svg></button>
                <button aria-label="打开"><svg class="ic"><use href="#open" /></svg></button>
                <button aria-label="保存"><svg class="ic"><use href="#save" /></svg></button>
                <button aria-label="另存为"><svg class="ic"><use href="#saveas" /></svg></button>
                <button aria-label="保存副本"><svg class="ic"><use href="#savecopy" /></svg></button>
                <button aria-label="保存备份"><svg class="ic"><use href="#saveto" /></svg></button>
                <button aria-label="撤消"><svg class="ic"><use href="#undo" /></svg></button>
                <i class="arrow dim"></i>
                <button aria-label="重做"><svg class="ic"><use href="#redo" /></svg></button>
                <i class="arrow dim"></i>
                <button aria-label="重新生成"><svg class="ic"><use href="#regen" /></svg></button>
                <button aria-label="窗口"><svg class="ic"><use href="#windows" /></svg></button>
                <i class="arrow"></i>
                <button aria-label="关闭窗口"><svg class="ic"><use href="#closewin" /></svg></button>
                <button aria-label="拭除未显示的"><svg class="ic"><use href="#erase" /></svg></button>
                <span class="quick-sep"></span>
                <button class="customize" aria-label="自定义"><i class="arrow"></i></button>
            </div>
            <h1>WQW (活动的) - Creo Parametric 8.0</h1>
            <div class="window-buttons">
                <button aria-label="最小化"><svg viewBox="0 0 10 10"><path d="M0 8h10" stroke="#666" stroke-width="2" /></svg></button>
                <button aria-label="最大化"><svg viewBox="0 0 10 10"><path d="M.5.5h9v9h-9zM0 2h10" fill="none" stroke="#666" /></svg></button>
                <button aria-label="关闭"><svg viewBox="0 0 10 10"><path d="M1 0l8 10M9 0L1 10" stroke="#666" stroke-width="1.800" /></svg></button>
            </div>
        </header>

        <nav class="tabs">
            <button class="tab file">文件</button>
            <button class="tab active">模型</button>
            <button class="tab">分析</button>
            <button class="tab">实时仿真</button>
            <button class="tab">注释</button>
            <button class="tab">工具</button>
            <button class="tab">视图</button>
            <button class="tab">柔性建模</button>
            <button class="tab">应用程序</button>
            <button class="tab">公用</button>
            <div class="tab-tools">
                <button aria-label="最小化功能区"><svg viewBox="0 0 12 12"><path d="M0 7l6-6 6 6H8L6 5 4 7z" fill="#fff" /></svg></button>
                <button aria-label="命令搜索"><svg viewBox="0 0 18 18"><use href="#search" /></svg></button>
                <button aria-label="学习"><svg viewBox="0 0 14 12"><use href="#grad" /></svg></button>
                <i class="arrow"></i>
                <button class="help" aria-label="帮助">?</button>
            </div>
        </nav>

        <div class="ribbon">
            <section class="group">
                <div class="group-body">
                    <button class="big"><svg><use href="#regen32" /></svg>重新生成<i class="arrow"></i></button>
                    <div class="col">
                        <button class="cmd" disabled><svg class="ic"><use href="#copy" /></svg>复制</button>
                        <button class="cmd" disabled><svg class="ic"><use href="#paste" /></svg>粘贴<i class="arrow"></i></button>
                        <button class="cmd" disabled><svg class="ic"><use href="#delete" /></svg>删除<i class="arrow"></i></button>
                    </div>
                </div>
                <button class="group-title">操作<i class="arrow"></i></button>
            </section>
            <section class="group">
                <div class="group-body">
                    <div class="col">
                        <button class="cmd"><svg class="ic"><use href="#udf" /></svg>用户定义特征</button>
                        <button class="cmd"><svg class="ic"><use href="#copygeom" /></svg>复制几何</button>
                        <button class="cmd"><svg class="ic"><use href="#shrink" /></svg>收缩包络</button>
                    </div>
                </div>
                <button class="group-title">获取数据<i class="arrow"></i></button>
            </section>
            <section class="group">
                <div class="group-body">
                    <div class="col">
                        <button class="cmd"><svg class="ic"><use href="#boolean" /></svg>布尔运算</button>
                        <button class="cmd"><svg class="ic"><use href="#split" /></svg>分割主体</button>
                        <button class="cmd"><svg class="ic"><use href="#newbody" /></svg>新建主体</button>
                    </div>
                </div>
                <button class="group-title">主体<i class="arrow"></i></button>
            </section>
            <section class="group">
                <div class="group-body">
                    <button class="big"><svg><use href="#plane32" /></svg>平面</button>
                    <div class="col">
                        <button class="cmd"><svg class="ic"><use href="#axis" /></svg>轴</button>
                        <button class="cmd"><svg class="ic"><use href="#point" /></svg>点<i class="arrow"></i></button>
                        <button class="cmd"><svg class="ic"><use href="#csys" /></svg>坐标系</button>
                    </div>
                    <button class="big"><svg><use href="#sketch32" /></svg>草绘</button>
                </div>
                <button class="group-title">基准<i class="arrow"></i></button>
            </section>
            <section class="group">
                <div class="group-body">
                    <button class="big"><svg><use href="#extrude32" /></svg>拉伸</button>
                    <div class="col">
                        <button class="cmd"><svg class="ic"><use href="#revolve" /></svg>旋转</button>
                        <button class="cmd"><svg class="ic"><use href="#sweep" /></svg>扫描<i class="arrow"></i></button>
                        <button class="cmd"><svg class="ic"><use href="#sweepblend" /></svg>扫描混合</button>
                    </div>
                </div>
                <button class="group-title">形状<i class="arrow"></i></button>
            </section>
            <section class="group">
                <div class="group-body">
                    <div class="col">
                        <button class="cmd" disabled><svg class="ic"><use href="#hole" /></svg>孔</button>
                        <button class="cmd" disabled><svg class="ic"><use href="#round" /></svg>倒圆角<i class="arrow"></i></button>
                        <button class="cmd" disabled><svg class="ic"><use href="#chamfer" /></svg>倒角<i class="arrow"></i></button>
                    </div>
                    <div class="col">
                        <button class="cmd" disabled><svg class="ic"><use href="#draft" /></svg>拔模<i class="arrow"></i></button>
                        <button class="cmd" disabled><svg class="ic"><use href="#shell" /></svg>壳</button>
                        <button class="cmd" disabled><svg class="ic"><use href="#rib" /></svg>筋<i class="arrow"></i></button>
                    </div>
                </div>
                <button class="group-title">工程<i class="arrow"></i></button>
            </section>
            <section class="group">
                <div class="group-body">
                    <button class="big"><svg><use href="#array32" /></svg>阵列<i class="arrow"></i></button>
                    <div class="col">
                        <button class="cmd" disabled><svg class="ic"><use href="#mirror" /></svg>镜像</button>
                        <button class="cmd"><svg class="ic"><use href="#trim" /></svg>修剪</button>
                        <button class="cmd" disabled><svg class="ic"><use href="#merge" /></svg>合并</button>
                    </div>
                    <div class="col">
                        <button class="cmd" disabled><svg class="ic"><use href="#extend" /></svg>延伸</button>
                        <button class="cmd"><svg class="ic"><use href="#offset" /></svg>偏移</button>
                        <button class="cmd"><svg class="ic"><use href="#intersect" /></svg>相交</button>
                    </div>
                    <div class="col">
                        <button class="cmd"><svg class="ic"><use href="#project" /></svg>投影</button>
                        <button class="cmd" disabled><svg class="ic"><use href="#thicken" /></svg>加厚</button>
                        <button class="cmd" disabled><svg class="ic"><use href="#solidify" /></svg>实体化</button>
                    </div>
                </div>
                <button class="group-title">编辑<i class="arrow"></i></button>
            </section>
            <section class="group">
                <div class="group-body">
                    <button class="big"><svg><use href="#blend32" /></svg>边界混合</button>
                    <div class="col">
                        <button class="cmd"><svg class="ic"><use href="#fill" /></svg>填充</button>
                        <button class="cmd"><svg class="ic"><use href="#style" /></svg>样式</button>
                        <button class="cmd" aria-label="自由式"><svg class="ic"><use href="#freestyle" /></svg></button>
                    </div>
                </div>
                <button class="group-title">曲面<i class="arrow"></i></button>
            </section>
            <section class="group">
                <div class="group-body">
                    <div class="col">
                        <button class="cmd"><svg class="ic"><use href="#curvature" /></svg>着色曲率</button>
                        <button class="cmd" disabled><svg class="ic"><use href="#reflect" /></svg>反射</button>
                        <button class="cmd"><svg class="ic"><use href="#diameter" /></svg>直径</button>
                    </div>
                    <div class="col">
                        <button class="cmd"><svg class="ic"><use href="#angle" /></svg>角度</button>
                        <button class="cmd"><svg class="ic"><use href="#distance" /></svg>距离</button>
                        <button class="cmd"><svg class="ic"><use href="#length" /></svg>长度</button>
                    </div>
                    <button class="big"><svg><use href="#ball32" /></svg>外观<i class="arrow"></i></button>
                    <button class="big"><svg><use href="#mass32" /></svg>质量属性</button>
                </div>
                <button class="group-title">常用命令<i class="arrow"></i></button>
            </section>
        </div>

        <main class="workspace">
            <aside class="navigator">
                <div class="nav-tabs">
                    <button class="nav-tab active"><svg class="nav-ic"><use href="#tree" /></svg>模型树</button>
                    <button class="nav-tab"><svg class="nav-ic"><use href="#folders" /></svg>文件夹浏览器</button>
                    <button class="nav-tab"><svg class="nav-ic"><use href="#favorites" /></svg>收藏夹</button>
                </div>
                <div class="tree-head">
                    <h2>模型树</h2>
                    <button aria-label="工具"><svg class="nav-ic"><use href="#tools" /></svg><i class="arrow"></i></button>
                    <button aria-label="设置"><svg class="nav-ic"><use href="#settings" /></svg><i class="arrow"></i></button>
                    <button aria-label="显示"><svg class="nav-ic"><use href="#treehide" /></svg></button>
                </div>
                <div class="tree-filter">
                    <svg class="ic"><use href="#filter" /></svg>
                    <div class="filter-box">
                        <input type="text" aria-label="过滤模型树">
                        <button aria-label="清除"><svg viewBox="0 0 8 8"><path d="M0 0l8 8M8 0L0 8" stroke="#999" stroke-width="1.300" /></svg></button>
                    </div>
                    <i class="arrow"></i>
                    <button class="add" aria-label="添加"><svg viewBox="0 0 11 11"><path d="M5.500 0v11M0 5.500h11" stroke="#999" stroke-width="3" /></svg></button>
                </div>
                <table class="tree">
                    <thead>
                        <tr><th></th><th><span>PRO_MP_MA</span></th><th><span>PTC_MASTER</span></th></tr>
                    </thead>
                    <tbody>
                        <tr><td><div class="node l1"><svg class="leaf"><use href="#cube" /></svg>WQW.PRT</div></td><td>0.000</td><td>6063-T5</td></tr>
                        <tr><td><div class="node l1"><i class="twist open"></i><svg class="leaf"><use href="#designitems" /></svg>设计项</div></td><td></td><td></td></tr>
                        <tr><td><div class="node l2"><i class="twist"></i><svg class="leaf"><use href="#material" /></svg>材料</div></td><td></td><td></td></tr>
                        <tr><td><div class="node l2"><i class="twist"></i><svg class="leaf"><use href="#bodies" /></svg>主体 (1)</div></td><td></td><td></td></tr>
                        <tr><td><div class="node l2"><i class="twist open"></i>注释</div></td><td></td><td></td></tr>
                        <tr><td><div class="node l4"><svg class="leaf"><use href="#note" /></svg>Note_0</div></td><td></td><td></td></tr>
                        <tr><td><div class="node l2"><svg class="leaf"><use href="#plane" /></svg>RIGHT</div></td><td></td><td></td></tr>
                        <tr><td><div class="node l2"><svg class="leaf"><use href="#plane" /></svg>TOP</div></td><td></td><td></td></tr>
                        <tr><td><div class="node l2"><svg class="leaf"><use href="#plane" /></svg>FRONT</div></td><td></td><td></td></tr>
                        <tr><td><div class="node l2"><svg class="leaf"><use href="#csys" /></svg>PRT_CSYS_DEF</div></td><td></td><td></td></tr>
                        <tr class="insert"><td></td><td></td><td></td></tr>
                        <tr class="rest"><td></td><td></td><td></td></tr>
                    </tbody>
                </table>
            </aside>

            <section class="viewport">
                <div class="viewbar">
                    <button aria-label="重新调整"><svg><use href="#v-refit" /></svg></button>
                    <button aria-label="放大"><svg><use href="#v-zoomin" /></svg></button>
                    <button aria-label="缩小"><svg><use href="#v-zoomout" /></svg></button>
                    <button aria-label="重画"><svg><use href="#v-repaint" /></svg></button>
                    <button class="more" aria-label="渲染选项"><svg><use href="#v-shade" /></svg></button>
                    <button class="more" aria-label="显示样式"><svg><use href="#v-style" /></svg></button>
                    <button class="more" aria-label="已保存方向"><svg><use href="#v-saved" /></svg></button>
                    <button aria-label="视图管理器"><svg><use href="#v-manager" /></svg></button>
                    <button aria-label="视图法向"><svg><use href="#v-front" /></svg></button>
                    <button aria-label="定向"><svg><use href="#v-orient" /></svg></button>
                    <button aria-label="透视图"><svg><use href="#v-persp" /></svg></button>
                    <button class="more" aria-label="截面"><svg><use href="#v-section" /></svg></button>
                    <button class="more" aria-label="基准显示"><svg><use href="#v-datum" /></svg></button>
                    <button class="on" aria-label="平面显示"><svg><use href="#v-plane" /></svg></button>
                    <button aria-label="轴显示"><svg><use href="#v-axis" /></svg></button>
                    <button aria-label="点显示"><svg><use href="#v-point" /></svg></button>
                    <button aria-label="坐标系显示"><svg><use href="#v-csys" /></svg></button>
                    <button class="on" aria-label="注释显示"><svg><use href="#v-note" /></svg></button>
                    <button class="on" aria-label="旋转中心"><svg><use href="#v-spin" /></svg></button>
                    <button aria-label="仿真"><svg><use href="#v-sim" /></svg></button>
                    <button aria-label="暂停"><svg><use href="#v-pause" /></svg></button>
                    <button aria-label="停止"><svg><use href="#v-stop" /></svg></button>
                </div>
                <p class="weight">重量:0.000</p>
                <!-- three default datum planes, origin at 0,0 -->
                <svg class="model" viewBox="-330 -270 660 540">
                    <path d="M-139-241L0-161 139-241V-81L278 0 139 81V241L0 161-139 241V81L-278 0-139-81z" fill="#e0e0e2" />
                    <path d="M0-161L139-81V81L0 161-139 81V-81z" fill="#d0cacc" />
                    <path d="M-139-241L278 0-139 241zM139-241L-278 0 139 241z" fill="none" stroke="#7d5961" />
                    <path d="M0 0v-20" stroke="#2cf22c" stroke-width="1.300" /><circle cx="0" cy="-20" r="1.800" fill="#2cf22c" />
                    <path d="M0 0l17 10" stroke="#ff5050" /><circle cx="17" cy="10" r="2.500" fill="#ff3030" />
                    <path d="M0 0l-17 10" stroke="#30f0ff" /><circle cx="-17" cy="10" r="2.500" fill="#30f0ff" />
                    <text x="-140" y="-241">FRONT</text>
                    <text x="278" y="0">TOP</text>
                    <text x="-140" y="241">RIGHT</text>
                </svg>
            </section>
        </main>

        <footer class="statusbar">
            <button class="on" aria-label="导航器"><svg><use href="#navpane" /></svg></button>
            <button aria-label="浏览器"><svg><use href="#globe" /></svg></button>
            <button aria-label="全屏"><svg><use href="#page" /></svg></button>
            <span class="bar"></span>
            <div class="status-right">
                <span class="bar"></span><span class="bar"></span>
                <div class="find">
                    <button aria-label="查找"><svg><use href="#find" /></svg></button>
                    <button aria-label="查找选项"><i class="arrow"></i></button>
                </div>
                <span class="bar"></span>
            </div>
            <select class="selection" aria-label="选择过滤器"><option>几何</option></select>
            <svg class="grip" viewBox="0 0 12 12"><path d="M0 12L12 0M5 12l7-7M9 12l3-3" stroke="#aaa" stroke-width="1.500" /></svg>
        </footer>
    </div>

    <div class="taskbar">
        <button class="start" aria-label="开始"><svg><use href="#winlogo" /></svg></button>
        <button class="start" aria-label="搜索"><svg><use href="#search" /></svg></button>
        <button class="start calc" aria-label="计算器"><svg><use href="#calc" /></svg></button>
        <button class="task"><svg><use href="#autocad" /></svg><span>Autodesk AutoCA...</span></button>
        <button class="task"><svg><use href="#creoapp" /></svg><span>WQW (活动的) - C...</span></button>
        <button class="task"><svg><use href="#browser" /></svg><span>编辑帖子 - 有没有...</span></button>
        <button class="task current"><svg><use href="#creopart" /></svg><span>WQW (活动的) - C...</span></button>
        <div class="tray">
            <svg class="ic" viewBox="0 0 16 16"><path d="M2 11l6-6 6 6" fill="none" stroke="#000" stroke-width="1.300" /></svg>
            <svg class="ic"><use href="#wechat" /></svg>
            <svg class="ic"><use href="#qq" /></svg>
            <svg class="ic" viewBox="0 0 16 16"><use href="#qq" width="16" height="16" /><circle cx="12" cy="11.500" r="4" fill="#f79a3c" /><path d="M10 10.500h4M10 12.500h4" stroke="#fff" /></svg>
            <svg class="ic"><use href="#network" /></svg>
            <svg class="ic"><use href="#volume" /></svg>
            <svg class="ic"><use href="#offline" /></svg>
            <span class="ime">五</span>
            <time class="clock"><span>8:40</span><span>2022/4/25 星期一</span></time>
            <svg class="ic"><use href="#action" /></svg>
        </div>
    </div>

    <div class="watermark">
        <div class="forum"><em>野火</em><span>论坛</span><svg class="flame"><use href="#flame" /></svg></div>
        <div class="site">www.proewildfire.cn</div>
    </div>
</body>

</html>
```

FILE: styles.css
```css
* {
    box-sizing: border-box;
}

body {
    margin: 0;
    height: 100vh;
    display: flex;
    flex-direction: column;
    position: relative;
    overflow: hidden;
    background: #a4a4a4;
    color: #3d4447;
    font-family: "Noto Sans", "Noto Sans CJK SC", sans-serif;
    font-size: 16px;
}

/* shadows of the windows lying above the screen edge */
body::before,
body::after {
    content: "";
    position: absolute;
    top: -4px;
    height: 4px;
    width: 284px;
    left: 46px;
    box-shadow: 0 0 4px 2px #555;
}

body::after {
    left: auto;
    right: 55px;
}

button {
    margin: 0;
    padding: 0;
    border: 0;
    background: none;
    color: inherit;
    font: inherit;
    white-space: nowrap;
}

svg {
    display: block;
    flex: none;
}

.sprite {
    position: absolute;
}

.ic {
    width: 16px;
    height: 16px;
}

.arrow {
    display: inline-block;
    flex: none;
    border: 4px solid transparent;
    border-top-color: #555b5d;
    border-bottom: 0;
}

.arrow.dim {
    border-top-color: #a9afaf;
}

.app {
    flex: 1;
    min-height: 0;
    margin: 4px;
    display: flex;
    flex-direction: column;
}

/* title bar */
.titlebar {
    height: 29px;
    display: grid;
    grid-template-columns: 1fr auto 1fr;
    grid-template-areas: "left title right";
    align-items: center;
    background: #d9dfdf;
}

.brand,
.quick {
    grid-area: left;
    display: flex;
    align-items: center;
}

.brand {
    padding-left: 8px;
    gap: 4px;
    font-family: Lato, sans-serif;
    font-size: 19px;
    line-height: 22px;
}

.brand span {
    padding-bottom: 3px;
}

.brand sup {
    font-size: 6px;
    vertical-align: 7px;
}

.quick {
    padding-left: 88px;
    gap: 8px;
}

.quick > .arrow {
    margin: 0 -1px;
}

.quick-sep {
    width: 1px;
    height: 24px;
    margin: 0 -1px 0 -4px;
    background: #a9b0b0;
}

.customize {
    padding-top: 2px;
    border-top: 1px solid #333;
    display: flex;
}

.customize .arrow {
    border-top-color: #333;
}

h1 {
    grid-area: title;
    margin: 0;
    font-size: 17px;
    font-weight: 400;
    line-height: 28px;
}

.window-buttons {
    grid-area: right;
    justify-self: end;
    display: flex;
    gap: 17px;
    padding-right: 12px;
}

.window-buttons svg {
    width: 10px;
    height: 10px;
}

/* ribbon tabs */
.tabs {
    height: 34px;
    display: flex;
    background: #3e4646;
    color: #fff;
}

.tab {
    padding: 0 24px 2px 23px;
    font-size: 17px;
}

.tab.file {
    padding: 0 20px 2px;
    background: linear-gradient(160deg, #68d243, #4da332);
}

.tab.active {
    background: #f8f9fb;
    color: #3c8424;
}

.tab-tools {
    margin-left: auto;
    padding: 0 8px 4px 0;
    display: flex;
    align-items: center;
    gap: 11px;
}

.tab-tools svg {
    width: 12px;
    height: 12px;
}

.tab-tools .arrow {
    border-top-color: #fff;
    border-top-width: 5px;
}

.help {
    font-size: 14px;
    font-weight: 700;
}

/* ribbon */
.ribbon {
    height: 126px;
    display: flex;
    background: #f8f9fb;
    border-bottom: 1px solid #b0bfc0;
}

.group {
    margin: 2px 0;
    padding: 0 7px;
    border-right: 1px solid #a9aeb1;
    display: flex;
    flex-direction: column;
}

.group-body {
    flex: 1;
    display: flex;
    gap: 8px;
}

.col {
    display: flex;
    flex-direction: column;
}

.cmd {
    height: 30px;
    display: flex;
    align-items: center;
    gap: 4px;
    line-height: 24px;
}

.cmd .arrow {
    margin-left: 2px;
}

.cmd:disabled {
    color: #b3b5b7;
}

.cmd:disabled .arrow {
    border-top-color: #a6a8aa;
}

.big {
    padding-top: 4px;
    display: flex;
    flex-direction: column;
    align-items: center;
    line-height: 24px;
}

.big svg {
    width: 32px;
    height: 32px;
    margin-bottom: 8px;
    overflow: visible;
}

.big .arrow {
    margin-top: 5px;
}

.group-title {
    height: 26px;
    line-height: 24px;
    display: flex;
    align-items: center;
    justify-content: center;
    gap: 2px;
}

/* navigator */
.workspace {
    flex: 1;
    min-height: 0;
    display: flex;
}

.navigator {
    width: 393px;
    display: flex;
    flex-direction: column;
    background: #f7fafb;
    border-right: 3px solid #d9dfdf;
}

.nav-tabs {
    height: 31px;
    display: flex;
    background: #d9dfdf;
}

.nav-tab {
    padding: 0 8px 1px;
    display: flex;
    align-items: center;
    gap: 3px;
}

.nav-tab.active {
    background: #f7fafb;
}

.nav-ic {
    width: 20px;
    height: 20px;
}

.tree-head {
    height: 30px;
    padding: 0 8px 2px 28px;
    display: flex;
    align-items: center;
    gap: 12px;
}

.tree-head h2 {
    margin: 0 auto 0 0;
    font-size: 16px;
    font-weight: 500;
}

.tree-head button {
    display: flex;
    align-items: center;
    gap: 6px;
}

.tree-filter {
    padding-left: 12px;
    height: 33px;
    display: flex;
    align-items: center;
    gap: 4px;
}

.filter-box {
    width: 310px;
    height: 33px;
    padding-right: 6px;
    display: flex;
    align-items: center;
    background: #fff;
    border: 1px solid #9fb0b4;
}

.filter-box input {
    flex: 1;
    min-width: 0;
    height: 100%;
    border: 0;
    background: none;
    font: inherit;
}

.filter-box svg {
    width: 8px;
    height: 8px;
}

.tree-filter > .arrow {
    margin: 0 7px 0 2px;
}

.add svg {
    width: 11px;
    height: 11px;
}

.tree {
    flex: 1;
    margin: 5px 5px 8px 8px;
    display: table;
    table-layout: fixed;
    border-collapse: separate;
    border-spacing: 0;
    width: 377px;
    height: 100%;
    line-height: 25px;
}

.tree th {
    height: 27px;
    padding: 3px 4px 0 5px;
    background: #fbfbfb;
    border-right: 1px solid #cfd2d4;
    border-bottom: 1px solid #cfd2d4;
    font-weight: 400;
    line-height: 23px;
    text-align: left;
    color: #222;
}

.tree th:first-child {
    width: 170px;
}

.tree th:nth-child(2) {
    width: 102px;
}

/* narrow empty strip at the right end of the header */
.tree th:last-child {
    border-right: 4px double #cfd2d4;
}

.tree th span {
    display: block;
    overflow: hidden;
    -webkit-mask-image: linear-gradient(to right, #000 75%, transparent);
    mask-image: linear-gradient(to right, #000 75%, transparent);
}

.tree td {
    height: 26px;
    padding: 0 0 0 1px;
    white-space: nowrap;
}

.tree td:first-child {
    padding: 0;
    border-right: 1px solid #e4e6ea;
}

.node {
    height: 26px;
    display: flex;
    align-items: center;
    gap: 5px;
}

.l1 {
    padding-left: 4px;
}

.l2 {
    padding-left: 24px;
}

.l4 {
    padding-left: 64px;
}

.leaf {
    width: 15px;
    height: 15px;
}

.twist {
    width: 15px;
    display: flex;
    justify-content: center;
}

.twist::before {
    content: "";
    border: 4px solid transparent;
    border-left: 7px solid #808486;
    border-right: 0;
}

.twist.open::before {
    border: 5px solid transparent;
    border-top: 7px solid #808486;
    border-bottom: 0;
}

.tree .insert td {
    height: 8px;
    border-bottom: 2px solid #62bf43;
}

.tree .rest td {
    height: auto;
}

/* graphics area */
.viewport {
    flex: 1;
    min-width: 0;
    position: relative;
    display: flex;
    align-items: center;
    justify-content: center;
    background: #e8e9ed;
}

.model {
    width: 660px;
    height: 540px;
    overflow: visible;
}

.model text {
    font-size: 23px;
    fill: #7d4f58;
}

.weight {
    position: absolute;
    left: 54px;
    top: 63px;
    margin: 0;
    font-size: 20px;
    line-height: 28px;
    color: #44147a;
}

.viewbar {
    position: absolute;
    top: 7px;
    left: 50%;
    transform: translateX(-50%);
    display: flex;
    gap: 3px;
    padding: 4px 4px 4px 3px;
    background: #f8f9fb;
    border: 1px solid #a0a3a5;
}

.viewbar button {
    width: 27px;
    height: 27px;
    display: flex;
    align-items: center;
    justify-content: center;
    border: 1px solid transparent;
}

.viewbar svg {
    width: 20px;
    height: 20px;
}

.viewbar .on,
.statusbar .on {
    background: #dfe1e3;
    border: 1px solid #a9acae;
}

.viewbar .more {
    width: 28px;
    position: relative;
}

.more::after {
    content: "";
    position: absolute;
    right: 0;
    bottom: 1px;
    border: 2px solid #333;
    border-top-color: transparent;
    border-left-color: transparent;
}

/* status bar */
.statusbar {
    height: 39px;
    padding: 5px 3px 0 5px;
    display: flex;
    align-items: center;
    gap: 3px;
    background: #f6fafb;
    border-top: 1px solid #b4b9bb;
}

.statusbar > button {
    width: 23px;
    height: 24px;
    display: flex;
    align-items: center;
    justify-content: center;
}

.statusbar button svg {
    width: 18px;
    height: 18px;
}

.bar {
    width: 1px;
    height: 30px;
    background: #a9aeb0;
}

.statusbar > .bar {
    height: 24px;
    margin-left: 4px;
}

.status-right {
    margin-left: auto;
    margin-right: 122px;
    margin-bottom: 5px;
    display: flex;
    align-items: center;
    gap: 3px;
}

.find {
    height: 24px;
    display: flex;
    border: 1px solid #b9bdbf;
    background: #fafafa;
}

.find button {
    width: 27px;
    display: flex;
    align-items: center;
    justify-content: center;
}

.find button + button {
    width: 14px;
    border-left: 1px solid #b9bdbf;
}

.selection {
    width: 225px;
    height: 29px;
    margin-bottom: 5px;
    padding: 0 7px;
    appearance: none;
    border: 1px solid #a9aeb0;
    border-radius: 0;
    background:
        linear-gradient(#a9aeb0, #a9aeb0) right 15px top / 1px 100% no-repeat,
        linear-gradient(45deg, transparent 50%, #666 50%) right 8px center / 4px 4px no-repeat,
        linear-gradient(315deg, transparent 50%, #666 50%) right 4px center / 4px 4px no-repeat,
        #f5f6f6;
    color: #3d4447;
    font: inherit;
}

.grip {
    width: 12px;
    height: 12px;
    align-self: flex-end;
    margin-bottom: 3px;
}

/* windows taskbar */
.taskbar {
    height: 40px;
    display: flex;
    background: #4b595b;
    color: #000;
    font-size: 12px;
}

.start {
    width: 48px;
    display: flex;
    align-items: center;
    justify-content: center;
}

.start svg {
    width: 18px;
    height: 18px;
}

.calc {
    width: 52px;
}

.calc svg {
    height: 24px;
}

.task {
    width: 160px;
    margin-right: 1px;
    padding: 0 10px;
    display: flex;
    align-items: center;
    gap: 4px;
    background: linear-gradient(#b5b9b9, #b5b9b9) center bottom / 152px 2px no-repeat;
}

.task svg {
    width: 24px;
    height: 24px;
}

.task.current {
    background: linear-gradient(90deg, transparent 56px, #bf8f90 56px, #bf8f90 77px, transparent 77px) #b3b9b9;
}

.tray {
    margin-left: auto;
    padding-right: 25px;
    display: flex;
    align-items: center;
    gap: 8px;
}

.ime {
    width: 16px;
    height: 16px;
    margin-left: 6px;
    border-radius: 2px;
    background: #2e86f0;
    color: #fff;
    font-weight: 700;
    line-height: 15px;
    text-align: center;
}

.clock {
    margin: 0 12px 0 10px;
    display: flex;
    flex-direction: column;
    align-items: center;
    line-height: 19px;
}

/* forum mark over the bottom right corner */
.watermark {
    position: absolute;
    right: 18px;
    bottom: 8px;
    pointer-events: none;
    display: flex;
    flex-direction: column;
    align-items: flex-end;
}

.forum {
    position: relative;
    display: flex;
    gap: 4px;
    color: #111;
    font-size: 41px;
    font-weight: 300;
    line-height: 44px;
}

.forum em {
    color: #ff6a32;
}

.flame {
    position: absolute;
    left: 66px;
    top: -20px;
    width: 20px;
    height: 42px;
}

.site {
    margin-right: 6px;
    color: #8f9696;
    font-family: "DejaVu Sans", sans-serif;
    font-size: 16px;
    font-style: italic;
    line-height: 16px;
}
```
